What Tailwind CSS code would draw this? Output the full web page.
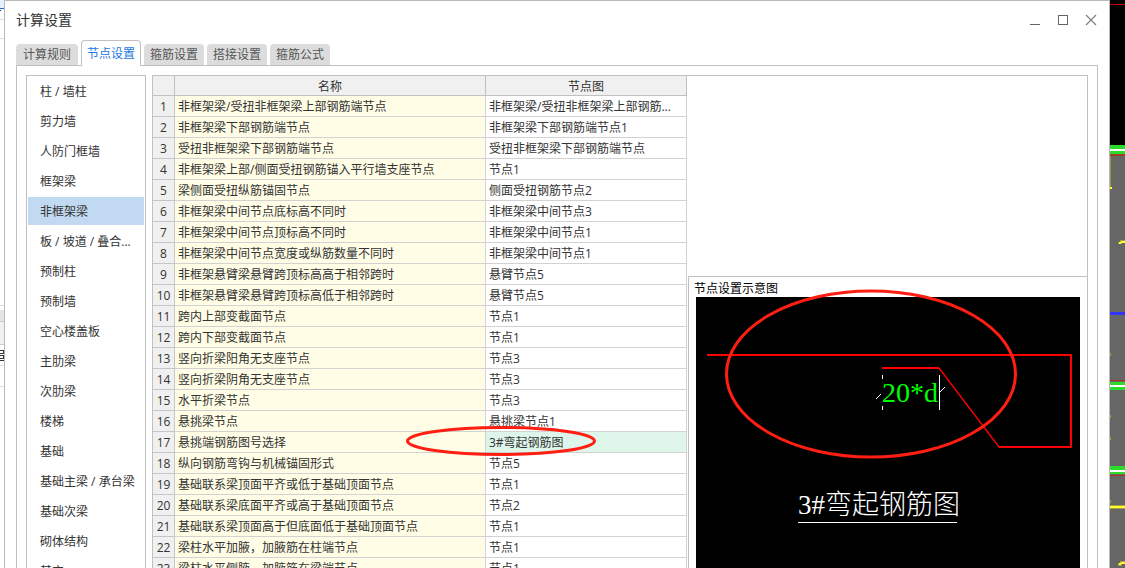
<!DOCTYPE html>
<html lang="zh-CN">
<head>
<meta charset="utf-8">
<title>计算设置</title>
<script src="https://cdn.jsdelivr.net/npm/@tailwindcss/browser@4"></script>
</head>
<body class="flex h-screen overflow-hidden bg-white font-['Open_Sans','Noto_Sans_CJK_SC',sans-serif] text-xs text-[#333]">

<!-- Sliver of the main window's left dock -->
<svg class="h-full w-1 shrink-0" shape-rendering="crispEdges" aria-hidden="true">
  <rect width="4" height="8" fill="#e5f1fd"/><rect y="8" width="4" height="1" fill="#1f6fd0"/>
  <rect y="10" width="1" height="1" fill="#333"/>
  <rect y="19" width="4" height="1" fill="#ddd"/><rect y="38" width="4" height="1" fill="#ddd"/>
  <rect y="305" width="4" height="1" fill="#ddd"/><rect y="310" width="4" height="11" fill="#e4e4e4"/>
  <rect y="321" width="4" height="23" fill="#f1f1f1"/><rect y="321" width="4" height="1" fill="#d0d0d0"/><rect y="344" width="4" height="1" fill="#d0d0d0"/>
  <path d="M0 350.500H3.500V353.500H0M0 355.500H3.500V358.500H0M0 360.500H4" fill="none" stroke="#333"/>
  <rect y="365" width="4" height="1" fill="#ddd"/><rect y="386" width="4" height="1" fill="#ddd"/>
</svg>

<main class="flex min-w-0 flex-1 flex-col border-x border-t border-[#b9b9b9] bg-white px-[11px]">
  <header class="flex h-[39px] shrink-0 items-center justify-between pr-px pb-0.5">
    <h1 class="text-sm">计算设置</h1>
    <div class="flex gap-4">
      <button class="flex size-3 items-center justify-center" aria-label="最小化"><svg class="size-3" viewBox="0 0 12 12" shape-rendering="crispEdges"><path d="M1 10.500H11" stroke="#666"/></svg></button>
      <button class="flex size-3 items-center justify-center" aria-label="最大化"><svg class="size-3" viewBox="0 0 12 12" fill="none" shape-rendering="crispEdges"><path d="M1.500 1.500H10.500V10.500H1.500Z" stroke="#666"/></svg></button>
      <button class="flex size-3 items-center justify-center" aria-label="关闭"><svg class="size-3" viewBox="0 0 12 12" fill="none"><path d="M1 1L11 11M11 1L1 11" stroke="#808080" stroke-width="1.2"/></svg></button>
    </div>
  </header>

  <nav class="flex h-[25px] shrink-0 items-end gap-[3px]">
    <button class="h-[21px] w-[62px] rounded-t-sm bg-[#dcdcdc] leading-5 text-[#555]">计算规则</button>
    <button class="relative z-10 -mb-px h-[26px] w-[60px] rounded-t border border-b-0 border-[#c0c0c0] bg-white leading-6 text-[#1b78e2]">节点设置</button>
    <button class="h-[21px] w-[60px] rounded-t-sm bg-[#dcdcdc] leading-5 text-[#555]">箍筋设置</button>
    <button class="h-[21px] w-[60px] rounded-t-sm bg-[#dcdcdc] leading-5 text-[#555]">搭接设置</button>
    <button class="h-[21px] w-[60px] rounded-t-sm bg-[#dcdcdc] leading-5 text-[#555]">箍筋公式</button>
  </nav>

  <section class="flex min-h-0 flex-1 gap-1.5 border-x border-t border-[#c0c0c0] px-[9px] pt-[9px]">
    <nav id="tree" class="flex w-[120px] shrink-0 flex-col gap-0.5 overflow-hidden border-x border-t border-[#c0c0c0] p-px"></nav>

    <div class="flex min-w-0 flex-1 border-x border-t border-[#c0c0c0]">
      <div class="w-[534px] shrink-0 overflow-hidden">
        <table class="w-full table-fixed border-separate border-spacing-0">
          <colgroup><col class="w-[22px]"><col class="w-[311px]"><col class="w-[201px]"></colgroup>
          <thead>
            <tr class="h-5 bg-[#f0f0f0] leading-4">
              <th class="border-r border-b border-[#c0c0c0] p-0" aria-label="序号"></th>
              <th class="border-r border-b border-[#c0c0c0] px-0 pt-0.5 pb-0 font-normal">名称</th>
              <th class="border-r border-b border-[#c0c0c0] px-0 pt-0.5 pb-0 font-normal">节点图</th>
            </tr>
          </thead>
          <tbody id="rows"></tbody>
        </table>
      </div>

      <div class="flex min-w-0 flex-1 flex-col pl-px">
        <div class="h-[200px] shrink-0"></div>
        <figure class="flex min-h-0 flex-1 flex-col border-t border-l border-[#c0c0c0] px-[7px]">
          <figcaption class="-ml-0.5 h-5 shrink-0 leading-6 text-black">节点设置示意图</figcaption>
          <div class="flex min-h-0 flex-1 justify-center bg-black">
            <svg class="h-[271px] w-[384px] shrink-0 overflow-visible" viewBox="696 297 384 271" fill="none">
              <g stroke="#f00" stroke-width="2" shape-rendering="crispEdges">
                <path d="M707 355H1071V447H999M882 368H939"/>
              </g>
              <path d="M939 368L999 447" stroke="#f00" stroke-width="1.300"/>
              <path d="M882.500 375V379M882.500 406V410M939.500 375V410M798 522.500H957" stroke="#fff" shape-rendering="crispEdges"/>
              <path d="M876 399L881 394M940 392L945 387" stroke="#fff"/>
              <text x="882" y="402" fill="#0f0" class="font-['Liberation_Serif',serif] text-[28px]">20*d</text>
              <text x="798" y="514" fill="#fff" class="font-['Liberation_Serif','Noto_Sans_CJK_SC',serif] text-[27px] font-light">3#弯起钢筋图</text>
              <ellipse cx="871" cy="374" rx="144.500" ry="83" stroke="#ff1f12" stroke-width="3"/>
            </svg>
          </div>
        </figure>
      </div>
    </div>
  </section>
</main>

<!-- Sliver of the drawing canvas behind the dialog -->
<svg class="h-full w-[15px] shrink-0 bg-[#666]" shape-rendering="crispEdges" aria-hidden="true">
  <rect width="15" height="145" fill="#000"/><rect y="4" width="15" height="1" fill="#c00000"/>
  <rect y="145" width="15" height="9" fill="#2bdc2b"/><rect y="149" width="15" height="2" fill="#fff"/><rect y="154" width="15" height="2" fill="#a04020"/>
  <rect y="156" width="1" height="31" fill="#9a9440"/><rect y="187" width="2" height="2" fill="#ff3"/>
  <path d="M8 242h2v-2h5v1h-3v3H8zM8 563h2v-2h5v1h-3v4H8z" fill="#a8a040"/>
  <path d="M9 242h2v-1h4v2h-4v1H9zM9 563h2v-1h4v2h-4v1H9z" fill="#ff3"/>
  <rect y="312" width="15" height="3" fill="#33f"/>
  <path d="M0 353h1v3h-1zM0 415h1v3h-1zM0 437h1v3h-1zM0 500h1v3h-1z" fill="#a8a040"/>
  <rect y="380" width="15" height="1" fill="#b03020"/><rect y="382" width="15" height="8" fill="#2bdc2b"/><rect y="385" width="15" height="2" fill="#fff"/>
  <rect y="466" width="15" height="8" fill="#2bdc2b"/><rect y="470" width="15" height="2" fill="#fff"/><rect y="475" width="15" height="1" fill="#b03020"/>
  <rect y="505" width="15" height="4" fill="#a8a040"/><rect y="506" width="15" height="2" fill="#ff3"/>
</svg>

<script>
const items = ['柱 / 墙柱','剪力墙','人防门框墙','框架梁','非框架梁','板 / 坡道 / 叠合...','预制柱','预制墙','空心楼盖板','主肋梁','次肋梁','楼梯','基础','基础主梁 / 承台梁','基础次梁','砌体结构','其它'];
document.getElementById('tree').innerHTML = items.map((t, i) =>
  `<button class="h-7 shrink-0 pt-0.5 pl-3 text-left leading-6 whitespace-nowrap ${i === 4 ? 'bg-[#c1d9f1]' : ''}">${t}</button>`).join('');

const rows = [
  ['非框架梁/受扭非框架梁上部钢筋端节点','非框架梁/受扭非框架梁上部钢筋...'],
  ['非框架梁下部钢筋端节点','非框架梁下部钢筋端节点1'],
  ['受扭非框架梁下部钢筋端节点','受扭非框架梁下部钢筋端节点'],
  ['非框架梁上部/侧面受扭钢筋锚入平行墙支座节点','节点1'],
  ['梁侧面受扭纵筋锚固节点','侧面受扭钢筋节点2'],
  ['非框架梁中间节点底标高不同时','非框架梁中间节点3'],
  ['非框架梁中间节点顶标高不同时','非框架梁中间节点1'],
  ['非框架梁中间节点宽度或纵筋数量不同时','非框架梁中间节点1'],
  ['非框架悬臂梁悬臂跨顶标高高于相邻跨时','悬臂节点5'],
  ['非框架悬臂梁悬臂跨顶标高低于相邻跨时','悬臂节点5'],
  ['跨内上部变截面节点','节点1'],
  ['跨内下部变截面节点','节点1'],
  ['竖向折梁阳角无支座节点','节点3'],
  ['竖向折梁阴角无支座节点','节点3'],
  ['水平折梁节点','节点3'],
  ['悬挑梁节点','悬挑梁节点1'],
  ['悬挑端钢筋图号选择','3#弯起钢筋图'],
  ['纵向钢筋弯钩与机械锚固形式','节点5'],
  ['基础联系梁顶面平齐或低于基础顶面节点','节点1'],
  ['基础联系梁底面平齐或高于基础顶面节点','节点2'],
  ['基础联系梁顶面高于但底面低于基础顶面节点','节点1'],
  ['梁柱水平加腋，加腋筋在柱端节点','节点1'],
  ['梁柱水平侧腋，加腋筋在梁端节点','节点1']
];
const ring = '<svg class="pointer-events-none absolute -top-[7px] -left-20 h-8 w-[192px] max-w-none" viewBox="0 0 192 32" fill="none"><ellipse cx="95" cy="16" rx="93.500" ry="13.500" stroke="#ff1f12" stroke-width="3"/></svg>';
document.getElementById('rows').innerHTML = rows.map(([name, node], i) => `
  <tr class="h-[21px] leading-[18px] whitespace-nowrap">
    <td class="border-r border-b border-[#c6c6c6] bg-[#f0f0f0] px-0 pt-0.5 pb-0 text-center">${i + 1}</td>
    <td class="border-r border-b border-[#d2d2d2] bg-[#fffde6] pt-0.5 pr-0 pb-0 pl-[3px]">${name}</td>
    <td class="border-r border-b border-[#d2d2d2] pt-0.5 pr-0 pb-0 pl-[3px] ${i === 16 ? 'relative bg-[#def6ea]' : ''}">${node}${i === 16 ? ring : ''}</td>
  </tr>`).join('');
</script>
</body>
</html>
